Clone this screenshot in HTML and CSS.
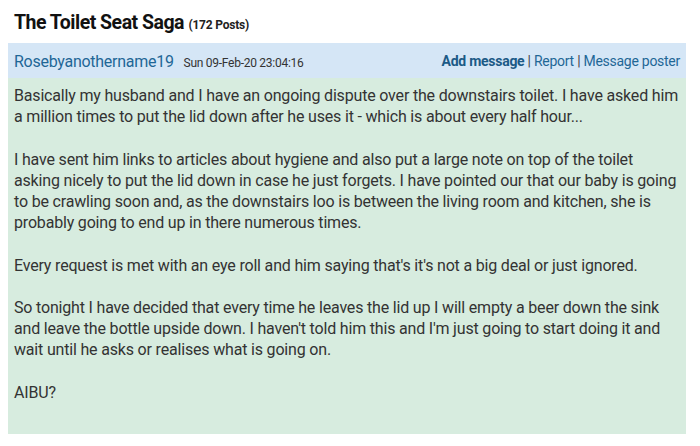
FILE: index.html
```html
<!DOCTYPE html>
<html>
<head>
<meta charset="utf-8">
<link rel="stylesheet" href="styles.css">
</head>
<body>
<div class="page">
  <h1 class="title">The Toilet Seat Saga <span class="count">(172 Posts)</span></h1>
  <div class="post">
    <div class="post-head">
      <div class="poster">
        <span class="name">Rosebyanothername19</span>
        <span class="date">Sun 09-Feb-20 23:04:16</span>
      </div>
      <div class="actions">
        <span class="add">Add message</span> <span class="sep">|</span> <span class="link">Report</span> <span class="sep">|</span> <span class="link">Message poster</span>
      </div>
    </div>
    <div class="post-body">
      <p>Basically my husband and I have an ongoing dispute over the downstairs toilet. I have asked him a million times to put the lid down after he uses it - which is about every half hour...</p>
      <p>I have sent him links to articles about hygiene and also put a large note on top of the toilet asking nicely to put the lid down in case he just forgets. I have pointed our that our baby is going to be crawling soon and, as the downstairs loo is between the living room and kitchen, she is probably going to end up in there numerous times.</p>
      <p>Every request is met with an eye roll and him saying that's it's not a big deal or just ignored.</p>
      <p>So tonight I have decided that every time he leaves the lid up I will empty a beer down the sink and leave the bottle upside down. I haven't told him this and I'm just going to start doing it and wait until he asks or realises what is going on.</p>
      <p>AIBU?</p>
    </div>
  </div>
</div>
</body>
</html>
```
FILE: styles.css
```css
html, body {
  margin: 0;
  padding: 0;
  background: #ffffff;
}
body {
  font-family: Roboto, "Liberation Sans", Arial, sans-serif;
  color: #333333;
  letter-spacing: -0.27px;
}
.page {
  padding: 0 8px;
  width: 678px;
}
.title {
  margin: 0;
  padding: 11px 0 0 6px;
  height: 43px;
  box-sizing: border-box;
  font-size: 19.5px;
  line-height: 24px;
  font-weight: 700;
  letter-spacing: -0.5px;
  color: #111111;
}
.count {
  font-size: 12px;
  font-weight: 700;
  letter-spacing: -0.2px;
  color: #222222;
}
.post-head {
  display: flex;
  justify-content: space-between;
  align-items: center;
  height: 35px;
  padding: 0 6px;
  background: #d5e6f6;
}
.poster {
  display: flex;
  align-items: baseline;
  gap: 10px;
  padding-top: 1px;
}
.name {
  font-size: 16px;
  color: #1f6796;
}
.date {
  font-size: 12px;
  color: #333333;
}
.actions {
  font-size: 14px;
  color: #1f6796;
  padding-top: 1px;
}
.add {
  font-weight: 700;
  color: #1c5a86;
}
.sep {
  color: #444444;
}
.post-body {
  background: #d7ecdf;
  padding: 7px 6px 31px 6px;
  font-size: 16px;
  line-height: 21.2px;
  letter-spacing: -0.18px;
  color: #333333;
}
.post-body p {
  margin: 0 0 21.2px 0;
}
.post-body p:last-child {
  margin-bottom: 0;
}
```
